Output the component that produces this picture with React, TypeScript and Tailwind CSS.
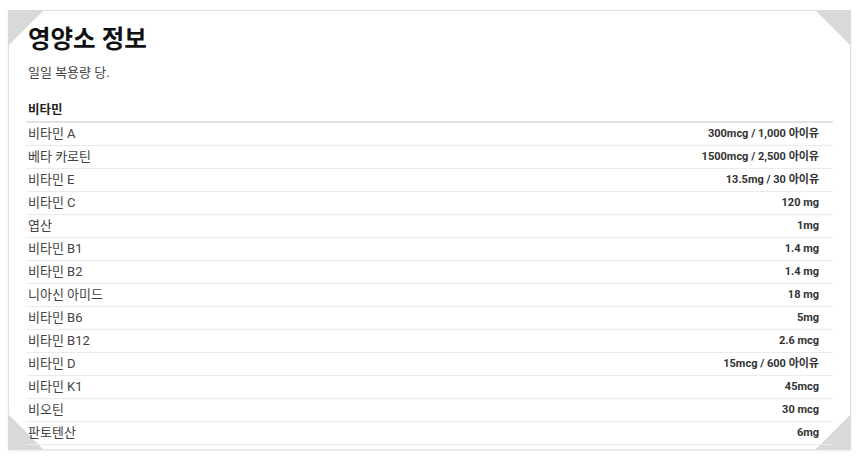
import React from "react";

const vitamins = [
  { name: "비타민 A", amount: "300mcg / 1,000 아이유" },
  { name: "베타 카로틴", amount: "1500mcg / 2,500 아이유" },
  { name: "비타민 E", amount: "13.5mg / 30 아이유" },
  { name: "비타민 C", amount: "120 mg" },
  { name: "엽산", amount: "1mg" },
  { name: "비타민 B1", amount: "1.4 mg" },
  { name: "비타민 B2", amount: "1.4 mg" },
  { name: "니아신 아미드", amount: "18 mg" },
  { name: "비타민 B6", amount: "5mg" },
  { name: "비타민 B12", amount: "2.6 mcg" },
  { name: "비타민 D", amount: "15mcg / 600 아이유" },
  { name: "비타민 K1", amount: "45mcg" },
  { name: "비오틴", amount: "30 mcg" },
  { name: "판토텐산", amount: "6mg" },
];

const App = () => {
  return (
    <div
      className="w-[860px] h-[457px] bg-white pt-[10px] pl-[8px] overflow-hidden"
      style={{ fontFamily: 'Roboto, "Noto Sans CJK KR", sans-serif' }}
    >
      {/* Paper frame */}
      <div className="relative w-[843px] h-[440px] border border-[#e1e1e1] bg-white shadow-[0_1px_2px_rgba(0,0,0,0.08)] px-[17px]">
        {/* corner folds */}
        <div className="absolute -left-px -top-px w-[36px] h-[36px] bg-[#d9d9d9] [clip-path:polygon(0_0,100%_0,0_100%)]" />
        <div className="absolute -right-px -top-px w-[36px] h-[36px] bg-[#d9d9d9] [clip-path:polygon(0_0,100%_0,100%_100%)]" />
        <div className="absolute -left-px -bottom-px w-[36px] h-[36px] bg-[#d9d9d9] [clip-path:polygon(0_0,100%_100%,0_100%)]" />
        <div className="absolute -right-px -bottom-px w-[36px] h-[36px] bg-[#d9d9d9] [clip-path:polygon(100%_0,100%_100%,0_100%)]" />

        <div className="relative pt-[13px] pl-[2px]">
          <h1 className="text-[24.5px] leading-[32px] font-bold text-[#111]">영양소 정보</h1>
          <p className="mt-[7px] text-[13px] leading-[20px] text-[#444]">일일 복용량 당.</p>
        </div>

        <div className="relative mt-[17px]">
          <div className="border-b-2 border-[#e3e3e3] pb-px pl-[2px]">
            <h2 className="text-[12.5px] leading-[20px] font-bold text-[#222]">비타민</h2>
          </div>
          {vitamins.map((v) => (
            <div
              key={v.name}
              className="flex items-center justify-between h-[23px] border-b border-[#ebebeb] pl-[2px] pr-[14px]"
            >
              <span className="text-[13px] text-[#444]">{v.name}</span>
              <span className="text-[11px] font-bold text-[#333]">{v.amount}</span>
            </div>
          ))}
        </div>
      </div>
    </div>
  );
};

export default App;
